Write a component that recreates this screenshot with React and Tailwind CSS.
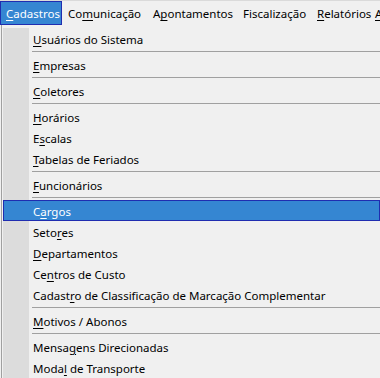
import React from 'react';

const font = { fontFamily: '"Noto Sans", "Liberation Sans", sans-serif' };

// label with one underlined mnemonic letter
const Label = ({ text, at }) => {
  if (at < 0) return <span>{text}</span>;
  return (
    <span>
      {text.slice(0, at)}
      <span className="underline underline-offset-[2px] decoration-1">{text[at]}</span>
      {text.slice(at + 1)}
    </span>
  );
};

const barItems = [
  { text: 'Cadastros', at: 0, w: 'w-[62px]', active: true },
  { text: 'Comunicação', at: 2, w: 'w-[85px]' },
  { text: 'Apontamentos', at: 1, w: 'w-[90px]' },
  { text: 'Fiscalização', at: -1, w: 'w-[74px]' },
  { text: 'Relatórios', at: 0, w: 'w-[58px]' },
  { text: 'Ajuda', at: 0, w: 'w-[50px]' },
];

const menu = [
  { text: 'Usuários do Sistema', at: 0 },
  'sep',
  { text: 'Empresas', at: 0 },
  'sep',
  { text: 'Coletores', at: 0 },
  'sep',
  { text: 'Horários', at: 0 },
  { text: 'Escalas', at: 1 },
  { text: 'Tabelas de Feriados', at: 0 },
  'sep',
  { text: 'Funcionários', at: 0 },
  'sep',
  { text: 'Cargos', at: 1, active: true },
  { text: 'Setores', at: 4 },
  { text: 'Departamentos', at: 0 },
  { text: 'Centros de Custo', at: 2 },
  { text: 'Cadastro de Classificação de Marcação Complementar', at: 6 },
  'sep',
  { text: 'Motivos / Abonos', at: 0 },
  'sep',
  { text: 'Mensagens Direcionadas', at: 5 },
  { text: 'Modal de Transporte', at: 4 },
];

const MenuRow = ({ item }) => {
  if (item === 'sep') {
    return (
      <div className="flex h-[5px]">
        <div className="w-[26px] shrink-0 bg-[#dcdcdc]" />
        <div className="flex-1 pl-[3px] pt-[2px]">
          <div className="h-px bg-[#a0a0a0]" />
        </div>
      </div>
    );
  }
  if (item.active) {
    return (
      <div className="flex h-[21px] items-center border border-[#1f2db0] bg-[#3586d2] pt-[2px] text-white">
        <div className="w-[29px] shrink-0" />
        <Label text={item.text} at={item.at} />
      </div>
    );
  }
  return (
    <div className="flex h-[21px] items-center">
      <div className="h-full w-[26px] shrink-0 bg-[#dcdcdc]" />
      <div className="pl-[4px] pt-[2px] whitespace-nowrap">
        <Label text={item.text} at={item.at} />
      </div>
    </div>
  );
};

export default function App() {
  return (
    <div className="h-[378px] w-[380px] overflow-hidden bg-[#f0f0f0] text-[11.5px] text-black" style={font}>
      <div className="flex h-[25px] border-t border-[#dadada] whitespace-nowrap">
        {barItems.map((b) => (
          <div
            key={b.text}
            className={
              b.active
                ? `${b.w} shrink-0 flex items-center pl-[5px] pt-[2px] border border-[#1f2db0] bg-[#3586d2] text-white`
                : `${b.w} shrink-0 flex items-center pl-[6px] pt-[2px]`
            }
          >
            <Label text={b.text} at={b.at} />
          </div>
        ))}
      </div>
      <div className="ml-[1px] border-l border-[#a0a0a0] pl-[1px] pt-[3px]">
        {menu.map((m, i) => (
          <MenuRow key={i} item={m} />
        ))}
      </div>
    </div>
  );
}
